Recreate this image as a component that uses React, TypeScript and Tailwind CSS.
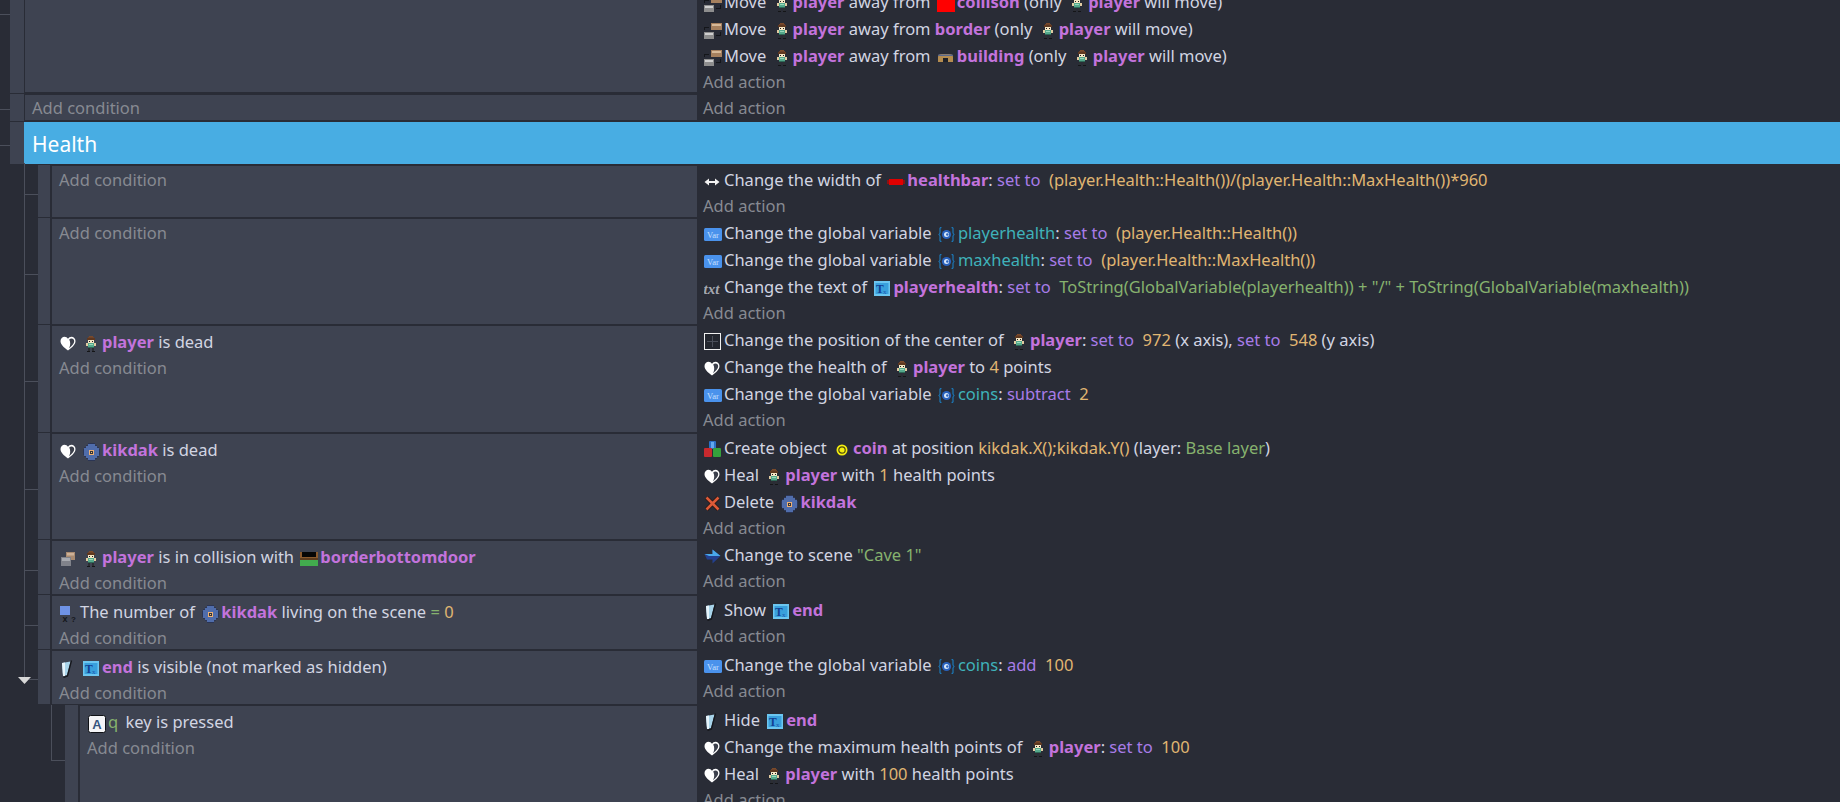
import React from "react";

const Lead = ({ children }: { children: React.ReactNode }) => (
  <span className="inline-flex w-[21px] h-[18px] items-center justify-start align-middle pl-[1px]">{children}</span>
);
const Slot = ({ children }: { children?: React.ReactNode }) => (
  <span className="inline-flex w-[22px] h-[18px] items-center justify-center align-middle">{children}</span>
);

const Heart = () => (
  <svg width="16" height="15" viewBox="0 0 16 15">
    <path d="M8 14.5 C3.5 11 0.5 8.5 0.5 5 C0.5 2.5 2.5 0.8 4.5 0.8 C6 0.8 7.2 1.6 8 2.8 C8.8 1.6 10 0.8 11.5 0.8 C13.5 0.8 15.5 2.5 15.5 5 C15.5 8.5 12.5 11 8 14.5 Z" fill="#ffffff" />
    <path d="M9.2 3.4 C11 1.9 14.2 2.2 14.2 5.2 C14.2 7.8 11.8 9.8 9 12.2 C10.6 9 10.6 6.2 9.2 3.4 Z" fill="#3c404c" />
  </svg>
);
const VarIcon = () => (
  <svg width="18" height="13" viewBox="0 0 18 13">
    <rect x="0" y="0" width="18" height="13" rx="1.5" fill="#4a92ec" />
    <text x="9" y="9.8" textAnchor="middle" fontSize="8.5" fontFamily="'Liberation Serif',serif" fill="#c9e0ff">Var</text>
  </svg>
);
const Globe = () => (
  <svg width="17" height="15" viewBox="0 0 17 15">
    <path d="M3.5 0.7 H2 V6.5 L0.7 7.5 L2 8.5 V14.3 H3.5 M13.5 0.7 H15 V6.5 L16.3 7.5 L15 8.5 V14.3 H13.5" fill="none" stroke="#1b86cf" strokeWidth="1" />
    <circle cx="8.5" cy="7.5" r="4.6" fill="#2a62bd" />
    <circle cx="8.5" cy="7.5" r="2.5" fill="#d8e8fb" />
    <circle cx="9.3" cy="7.5" r="1.2" fill="#2a62bd" />
  </svg>
);
const Tx = () => (
  <svg width="16" height="15" viewBox="0 0 16 15">
    <rect x="0" y="0" width="16" height="15" fill="#6cc6f0" />
    <rect x="1.5" y="2" width="13" height="11" fill="#39a0dc" />
    <text x="2" y="11.5" fontSize="11.5" fontWeight="700" fontFamily="'Liberation Serif',serif" fill="#133f92">T</text>
    <text x="9" y="12.5" fontSize="7" fontFamily="'Liberation Serif',serif" fill="#1d57b0">x</text>
  </svg>
);
const Glass = () => (
  <svg width="18" height="18" viewBox="0 0 18 18">
    <path d="M2 3 L10.5 1.5 L7 15 L3 16 Z" fill="#a8d4ea" />
    <path d="M2 3 L5 2.5 L5 16 L3 16 Z" fill="#e6f4fb" />
    <path d="M11.5 0.5 L7.5 16 L3.5 17.5" fill="none" stroke="#15171c" strokeWidth="1.3" />
  </svg>
);
const Move = () => (
  <svg width="18" height="16" viewBox="0 0 18 16" shapeRendering="crispEdges">
    <rect x="7" y="0" width="11" height="7" fill="#a5805e" />
    <rect x="8" y="1" width="9" height="2" fill="#d6b998" />
    <rect x="0" y="9" width="10" height="7" fill="#8e8e8e" />
    <rect x="1" y="10" width="8" height="2" fill="#cfcfcf" />
    <path d="M0 7 V4 H5 V5 H1 V7 Z" fill="#14161a" />
    <path d="M12 13 H17 V9 H16 V12 H12 Z" fill="#14161a" />
  </svg>
);
const Collide = () => (
  <svg width="16" height="16" viewBox="0 0 16 16">
    <rect x="6" y="1" width="9" height="8" fill="#a88a70" />
    <rect x="7" y="2" width="7" height="2.5" fill="#cdb197" />
    <rect x="1" y="6" width="10" height="9" fill="#80828a" />
    <rect x="2" y="7" width="8" height="3" fill="#a8aab0" />
  </svg>
);
const Player = () => (
  <svg width="10" height="16" viewBox="0 0 10 16" shapeRendering="crispEdges">
    <rect x="3" y="0" width="4" height="1" fill="#7a4a2a" />
    <rect x="2" y="1" width="6" height="3" fill="#70432a" />
    <rect x="1" y="2" width="8" height="2" fill="#5e3820" />
    <rect x="2" y="4" width="6" height="3" fill="#f6e6c4" />
    <rect x="3" y="5" width="1" height="1" fill="#1e1e1e" />
    <rect x="6" y="5" width="1" height="1" fill="#1e1e1e" />
    <rect x="2" y="7" width="6" height="4" fill="#55a98c" />
    <rect x="0" y="7" width="2" height="3" fill="#e2cba0" />
    <rect x="8" y="7" width="2" height="3" fill="#e2cba0" />
    <rect x="3" y="8" width="4" height="1" fill="#9ad8bc" />
    <rect x="2" y="11" width="6" height="1" fill="#2f6a58" />
    <rect x="2" y="12" width="2" height="3" fill="#2c2e33" />
    <rect x="6" y="12" width="2" height="3" fill="#2c2e33" />
    <rect x="1" y="15" width="3" height="1" fill="#141518" />
    <rect x="6" y="15" width="3" height="1" fill="#141518" />
  </svg>
);
const Kikdak = () => (
  <svg width="17" height="18" viewBox="0 0 17 18" shapeRendering="crispEdges">
    <path d="M5 0 H12 V2 H14 V4 H16 V6 H17 V12 H16 V14 H14 V16 H12 V18 H5 V16 H3 V14 H1 V12 H0 V6 H1 V4 H3 V2 H5 Z" fill="#2b3554" />
    <path d="M5 1 H12 V3 H14 V5 H16 V13 H14 V15 H12 V17 H5 V15 H3 V13 H1 V5 H3 V3 H5 Z" fill="#506dab" />
    <rect x="6" y="7" width="5" height="5" fill="#ecb074" />
    <rect x="7" y="8" width="3" height="3" fill="#34343a" />
    <rect x="8" y="9" width="1" height="1" fill="#f0c078" />
  </svg>
);
const Coin = () => (
  <svg width="12" height="12" viewBox="0 0 12 12">
    <circle cx="6" cy="6" r="5.5" fill="#f4ee10" />
    <circle cx="6" cy="6" r="3.2" fill="none" stroke="#4d4a10" strokeWidth="1.2" />
    <circle cx="6" cy="6" r="1.2" fill="#f4ee10" />
  </svg>
);
const Red = () => <span className="block w-[18px] h-[16px] bg-[#ff0000]" />;
const Building = () => (
  <svg width="15" height="8" viewBox="0 0 15 8">
    <path d="M0 8 V3 Q0 0 4 0 H11 Q15 0 15 3 V8 H10 V5 Q10 4 9 4 H6 Q5 4 5 5 V8 Z" fill="#b48c50" />
    <rect x="0" y="0.5" width="15" height="1.5" rx="0.7" fill="#5a6a90" />
    <rect x="5" y="4" width="5" height="4" fill="#1d2028" />
  </svg>
);
const Door = () => (
  <svg width="18" height="14" viewBox="0 0 18 14" shapeRendering="crispEdges">
    <rect x="0" y="0" width="18" height="7" fill="#8a5a2e" />
    <rect x="2" y="0" width="14" height="5" fill="#060606" />
    <rect x="0" y="6" width="18" height="2" fill="#5c3c1e" />
    <rect x="0" y="8" width="18" height="6" fill="#42ab4e" />
  </svg>
);
const HealthBar = () => (
  <svg width="18" height="6" viewBox="0 0 18 6" shapeRendering="crispEdges">
    <rect x="0" y="1" width="18" height="4" fill="#8c1212" />
    <rect x="2" y="0" width="14" height="6" fill="#e00000" />
  </svg>
);
const WidthIco = () => (
  <svg width="16" height="10" viewBox="0 0 16 10">
    <path d="M0.5 5 L5 1.5 V4 H11 V1.5 L15.5 5 L11 8.5 V6 H5 V8.5 Z" fill="#f2f2f2" />
  </svg>
);
const TxtIco = () => (
  <svg width="18" height="18" viewBox="0 0 18 18">
    <text x="-0.5" y="14" fontSize="15" fontStyle="italic" fontWeight="700" fontFamily="'Liberation Serif',serif" fill="#a4a7af">txt</text>
  </svg>
);
const PosIco = () => (
  <svg width="17" height="17" viewBox="0 0 17 17">
    <rect x="0.5" y="0.5" width="16" height="16" fill="#23262e" stroke="#f0f0f0" strokeWidth="1" />
    <path d="M8.5 3 V14 M3 8.5 H14" stroke="#4a4e59" strokeWidth="1" />
  </svg>
);
const CreateIco = () => (
  <svg width="17" height="17" viewBox="0 0 17 17">
    <rect x="5" y="0" width="7" height="8" rx="1" fill="#2d6fc6" />
    <rect x="7" y="1" width="3" height="6" fill="#63a8ec" />
    <rect x="0" y="7" width="8" height="9" rx="1" fill="#c8292e" />
    <rect x="9" y="7" width="8" height="9" rx="1" fill="#35a03c" />
  </svg>
);
const DelIco = () => (
  <svg width="17" height="17" viewBox="0 0 17 17">
    <path d="M2.5 2.5 L14.5 14.5 M14.5 2.5 L2.5 14.5" stroke="#2a1512" strokeWidth="4.2" />
    <path d="M2.5 2.5 L14.5 14.5 M14.5 2.5 L2.5 14.5" stroke="#dc5a38" strokeWidth="2.6" />
  </svg>
);
const ArrowIco = () => (
  <svg width="17" height="15" viewBox="0 0 17 15">
    <path d="M0.5 5 H8.5 V0.5 L16.5 7 L8.5 14.5 V10.5 H3 Z" fill="#23408f" />
    <path d="M0.5 5 H8.5 V0.5 L16.5 7 H5 Z" fill="#4aa8ea" />
  </svg>
);
const NumIco = () => (
  <svg width="18" height="18" viewBox="0 0 18 18">
    <rect x="0" y="1" width="10" height="9" fill="#6f93e6" />
    <text x="2.5" y="17" fontSize="9" fontFamily="'Liberation Sans',sans-serif" fontWeight="700" fill="#15171c">x</text>
    <text x="11" y="17" fontSize="8" fontFamily="'Liberation Sans',sans-serif" fontWeight="700" fill="#15171c">?</text>
  </svg>
);
const KeyIco = () => (
  <svg width="18" height="18" viewBox="0 0 18 18">
    <rect x="0.5" y="0.5" width="17" height="17" rx="2" fill="#f4f4f6" stroke="#101216" />
    <text x="9" y="14" textAnchor="middle" fontSize="13" fontWeight="700" fontFamily="'Liberation Sans',sans-serif" fill="#35557f">A</text>
  </svg>
);

const N = ({ children }: { children: React.ReactNode }) => <span className="font-bold text-[#c373dc]">{children}</span>;
const S = ({ children }: { children: React.ReactNode }) => <span className="text-[#a87ce8]">{children}</span>;
const E = ({ children }: { children: React.ReactNode }) => <span className="text-[#e0b672]">{children}</span>;
const G = ({ children }: { children: React.ReactNode }) => <span className="text-[#86b26e]">{children}</span>;
const V = ({ children }: { children: React.ReactNode }) => <span className="text-[#3fb2ba]">{children}</span>;
const P = () => <Slot><Player /></Slot>;
const K = () => <Slot><Kikdak /></Slot>;

const Row = ({ children }: { children: React.ReactNode }) => (
  <div className="h-[27px] leading-[27px] whitespace-pre text-[#d2d5e2]">{children}</div>
);
const Add = ({ children }: { children: React.ReactNode }) => (
  <div className="h-[26px] leading-[26px] text-[#878a92]">{children}</div>
);

const Event = ({ hClass, left, conds, condPad = "pt-[2px]", acts }: {
  hClass: string; left: React.ReactNode; conds?: React.ReactNode; condPad?: string; acts: React.ReactNode;
}) => (
  <div className={"flex shrink-0 " + hClass}>
    {left}
    <div className="w-[12px] shrink-0 bg-[#3e4351] mb-[1px]" />
    <div className={"ml-[2px] w-[645px] flex-none my-[1px] bg-[#3e4351] pl-[7px] " + condPad}>
      {conds}
      <Add>Add condition</Add>
    </div>
    <div className="pl-[6px] pt-[1px]">
      {acts}
      <Add>Add action</Add>
    </div>
  </div>
);

const Tree = () => (
  <div className="relative w-[38px] shrink-0">
    <div className="absolute left-[24px] top-[-2px] bottom-0 w-px bg-[#4b4f5b]" />
    <div className="absolute left-[24px] top-[calc(50%+2px)] w-[14px] h-px bg-[#4b4f5b]" />
  </div>
);

const TopTree = ({ tick }: { tick: string }) => (
  <div className="relative w-[10px] shrink-0">
    <div className={"absolute left-0 w-[10px] h-px bg-[#4b4f5b] " + tick} />
  </div>
);

const LastTree = () => (
  <div className="relative w-[38px] shrink-0">
    <div className="absolute left-[24px] top-[-2px] h-[30px] w-px bg-[#4b4f5b]" />
    <div className="absolute left-[24px] top-[29px] w-[14px] h-px bg-[#4b4f5b]" />
    <svg className="absolute left-[18px] top-[27px]" width="13" height="8" viewBox="0 0 13 8"><path d="M0 0 H13 L6.5 7 Z" fill="#d8d8d8" /></svg>
  </div>
);

const NestedTree = () => (
  <div className="relative w-[65px] shrink-0">
    <div className="absolute left-[51px] top-0 h-[56px] w-px bg-[#4b4f5b]" />
    <div className="absolute left-[51px] top-[55px] w-[14px] h-px bg-[#4b4f5b]" />
  </div>
);

export default function App() {
  return (
    <div className="h-screen w-full overflow-hidden bg-[#292c36] text-[16.5px] font-['Noto_Sans','Open_Sans',sans-serif]">
      <div className="-mt-[12px] flex h-[106px]">
        <TopTree tick="top-[26px]" />
        <div className="w-[14px] shrink-0 bg-[#3e4351] mb-[1px]" />
        <div className="ml-[1px] w-[672px] shrink-0 mb-[2px] bg-[#3e4351]" />
        <div className="pl-[6px]">
          <Row><Lead><Move /></Lead>Move <P /><N>player</N> away from <Slot><Red /></Slot><N>collison</N> (only <P /><N>player</N> will move)</Row>
          <Row><Lead><Move /></Lead>Move <P /><N>player</N> away from <N>border</N> (only <P /><N>player</N> will move)</Row>
          <Row><Lead><Move /></Lead>Move <P /><N>player</N> away from <Slot><Building /></Slot><N>building</N> (only <P /><N>player</N> will move)</Row>
          <Add>Add action</Add>
        </div>
      </div>

      <div className="flex h-[28px]">
        <TopTree tick="top-[15px]" />
        <div className="w-[14px] shrink-0 bg-[#3e4351] mb-[1px]" />
        <div className="ml-[1px] w-[672px] shrink-0 mt-[1px] mb-[2px] bg-[#3e4351] pl-[7px]"><Add>Add condition</Add></div>
        <div className="pl-[6px] pt-[1px]"><Add>Add action</Add></div>
      </div>

      <div className="flex h-[43px]">
        <TopTree tick="top-[23px]" />
        <div className="w-[14px] shrink-0 bg-[#3e4351] mb-[1px]" />
        <div className="flex-1 mb-[1px] bg-[#48ade3] pl-[8px] pt-[2px] text-[21px] leading-[40px] text-white">Health</div>
      </div>

      <Event hClass="h-[53px]" left={<Tree />} condPad="pt-[1px]"
        acts={<Row><Lead><WidthIco /></Lead>Change the width of <Slot><HealthBar /></Slot><N>healthbar</N>: <S>set to</S>  <E>(player.Health::Health())/(player.Health::MaxHealth())*960</E></Row>} />
      <Event hClass="h-[107px]" left={<Tree />} condPad="pt-[1px]"
        acts={<>
          <Row><Lead><VarIcon /></Lead>Change the global variable <Slot><Globe /></Slot><V>playerhealth</V>: <S>set to</S>  <E>(player.Health::Health())</E></Row>
          <Row><Lead><VarIcon /></Lead>Change the global variable <Slot><Globe /></Slot><V>maxhealth</V>: <S>set to</S>  <E>(player.Health::MaxHealth())</E></Row>
          <Row><Lead><TxtIco /></Lead>Change the text of <Slot><Tx /></Slot><N>playerhealth</N>: <S>set to</S>  <G>ToString(GlobalVariable(playerhealth)) + "/" + ToString(GlobalVariable(maxhealth))</G></Row>
        </>} />
      <Event hClass="h-[108px]" left={<Tree />}
        conds={<Row><Lead><Heart /></Lead><P /><N>player</N> is dead</Row>}
        acts={<>
          <Row><Lead><PosIco /></Lead>Change the position of the center of <P /><N>player</N>: <S>set to</S>  <E>972</E> (x axis), <S>set to</S>  <E>548</E> (y axis)</Row>
          <Row><Lead><Heart /></Lead>Change the health of <P /><N>player</N> to <E>4</E> points</Row>
          <Row><Lead><VarIcon /></Lead>Change the global variable <Slot><Globe /></Slot><V>coins</V>: <S>subtract</S>  <E>2</E></Row>
        </>} />
      <Event hClass="h-[107px]" left={<Tree />}
        conds={<Row><Lead><Heart /></Lead><K /><N>kikdak</N> is dead</Row>}
        acts={<>
          <Row><Lead><CreateIco /></Lead>Create object <Slot><Coin /></Slot><N>coin</N> at position <E>kikdak.X();kikdak.Y()</E> (layer: <G>Base layer</G>)</Row>
          <Row><Lead><Heart /></Lead>Heal <P /><N>player</N> with <E>1</E> health points</Row>
          <Row><Lead><DelIco /></Lead>Delete <K /><N>kikdak</N></Row>
        </>} />
      <Event hClass="h-[55px]" left={<Tree />}
        conds={<Row><Lead><Collide /></Lead><P /><N>player</N> is in collision with <Slot><Door /></Slot><N>borderbottomdoor</N></Row>}
        acts={<Row><Lead><ArrowIco /></Lead>Change to scene <G>"Cave 1"</G></Row>} />
      <Event hClass="h-[55px]" left={<Tree />}
        conds={<Row><Lead><NumIco /></Lead>The number of <K /><N>kikdak</N> living on the scene <G>=</G> <E>0</E></Row>}
        acts={<Row><Lead><Glass /></Lead>Show <Slot><Tx /></Slot><N>end</N></Row>} />
      <Event hClass="h-[55px]" left={<LastTree />}
        conds={<Row><Lead><Glass /></Lead><Slot><Tx /></Slot><N>end</N> is visible (not marked as hidden)</Row>}
        acts={<Row><Lead><VarIcon /></Lead>Change the global variable <Slot><Globe /></Slot><V>coins</V>: <S>add</S>  <E>100</E></Row>} />

      <div className="flex h-[110px]">
        <NestedTree />
        <div className="w-[13px] shrink-0 bg-[#3e4351]" />
        <div className="ml-[2px] w-[617px] shrink-0 mt-[1px] bg-[#3e4351] pl-[7px] pt-[2px]">
          <Row><Lead><KeyIco /></Lead><G>q</G> <span className="ml-[3px]">key is pressed</span></Row>
          <Add>Add condition</Add>
        </div>
        <div className="pl-[6px] pt-[1px]">
          <Row><Lead><Glass /></Lead>Hide <Slot><Tx /></Slot><N>end</N></Row>
          <Row><Lead><Heart /></Lead>Change the maximum health points of <P /><N>player</N>: <S>set to</S>  <E>100</E></Row>
          <Row><Lead><Heart /></Lead>Heal <P /><N>player</N> with <E>100</E> health points</Row>
          <Add>Add action</Add>
        </div>
      </div>
    </div>
  );
}
